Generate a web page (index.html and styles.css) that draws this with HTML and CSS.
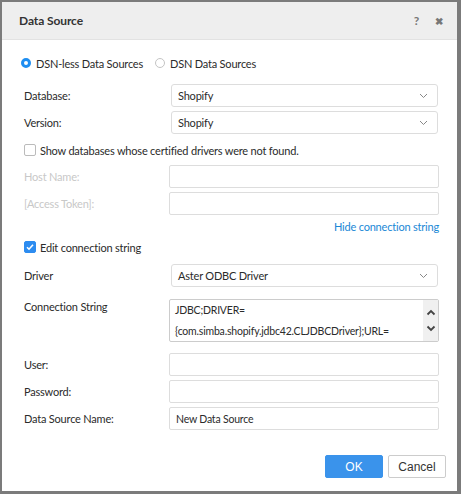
FILE: index.html
```html
<!DOCTYPE html>
<html>
<head>
<meta charset="utf-8">
<link rel="stylesheet" href="styles.css">
</head>
<body>
<div class="dialog">
  <div class="titlebar">
    <span class="title">Data Source</span>
    <span class="tools"><span class="help">?</span><span class="close">&#x2716;</span></span>
  </div>
  <div class="content">
    <div class="radios">
      <span class="radio checked"></span><span class="rlabel">DSN-less Data Sources</span>
      <span class="radio"></span><span class="rlabel">DSN Data Sources</span>
    </div>
    <div class="row r-db"><span class="label">Database:</span><div class="select">Shopify<svg class="chev" width="9" height="6" viewBox="0 0 9 6"><path d="M1 1l3.5 3.5L8 1" fill="none" stroke="#888" stroke-width="1"/></svg></div></div>
    <div class="row r-ver"><span class="label">Version:</span><div class="select">Shopify<svg class="chev" width="9" height="6" viewBox="0 0 9 6"><path d="M1 1l3.5 3.5L8 1" fill="none" stroke="#888" stroke-width="1"/></svg></div></div>
    <div class="check-row r-show"><span class="cbox"></span><span>Show databases whose certified drivers were not found.</span></div>
    <div class="row r-host"><span class="label disabled">Host Name:</span><div class="input"></div></div>
    <div class="row r-token"><span class="label disabled">[Access Token]:</span><div class="input"></div></div>
    <div class="link-row"><a class="link">Hide connection string</a></div>
    <div class="check-row r-edit"><span class="cbox on"><svg width="10" height="10" viewBox="0 0 10 10"><path d="M2 5.2l2 2 4-4.4" fill="none" stroke="#fff" stroke-width="1.6"/></svg></span><span>Edit connection string</span></div>
    <div class="row r-driver"><span class="label">Driver</span><div class="select">Aster ODBC Driver<svg class="chev" width="9" height="6" viewBox="0 0 9 6"><path d="M1 1l3.5 3.5L8 1" fill="none" stroke="#888" stroke-width="1"/></svg></div></div>
    <div class="row r-conn"><span class="label">Connection String</span>
      <div class="textarea">
        <div class="ta-text"><div>JDBC;DRIVER=</div><div>{com.simba.shopify.jdbc42.CLJDBCDriver};URL=</div></div>
        <div class="scroll">
          <svg width="10" height="7" viewBox="0 0 10 7"><path d="M1.5 5.5L5 2l3.5 3.5" fill="none" stroke="#444" stroke-width="1.8"/></svg>
          <svg width="10" height="7" viewBox="0 0 10 7"><path d="M1.5 1.5L5 5l3.5-3.5" fill="none" stroke="#444" stroke-width="1.8"/></svg>
        </div>
      </div>
    </div>
    <div class="row r-user"><span class="label">User:</span><div class="input"></div></div>
    <div class="row r-pass"><span class="label">Password:</span><div class="input"></div></div>
    <div class="row r-dsn"><span class="label">Data Source Name:</span><div class="input val">New Data Source</div></div>
    <div class="buttons"><button class="btn ok">OK</button><button class="btn cancel">Cancel</button></div>
  </div>
</div>
</body>
</html>
```
FILE: styles.css
```css
* { box-sizing: border-box; }
html, body { margin: 0; padding: 0; background: #fff; }
body { font-family: Lato, "Liberation Sans", sans-serif; font-size: 11px; letter-spacing: -0.2px; color: #2b2b2b; }
.dialog {
  width: 461px; height: 494px;
  border-style: solid; border-color: #7b7b7b;
  border-width: 2px 4px 3px 2px;
  display: flex; flex-direction: column;
}
.titlebar {
  height: 38px; background: #eeeeee; border-bottom: 1px solid #e2e2e2;
  display: flex; align-items: center; justify-content: space-between;
  padding: 0 14px 0 17px;
}
.title { font-weight: bold; font-size: 12px; letter-spacing: -0.1px; color: #333; }
.tools { display: flex; align-items: center; gap: 16px; color: #777; font-weight: bold; }
.help { font-size: 12px; }
.close { font-size: 10px; }
.content { padding: 0 18px 0 22px; }
.radios { display: flex; align-items: center; height: 18px; margin-top: 14px; }
.radio { width: 10px; height: 10px; border-radius: 50%; border: 1px solid #c4c4c4; margin: 0 5px 0 -3px; background: #fff; }
.radio.checked { border: 3px solid #1f8ef1; }
.rlabel { margin-right: 15px; }
.row { display: flex; align-items: center; }
.label { width: 147px; flex: none; }
.label.disabled { color: #c8c8c8; }
.select {
  width: 267px; height: 23px; border: 1px solid #ddd; border-radius: 3px;
  display: flex; align-items: center; justify-content: space-between; padding: 0 9px 0 6px;
}
.input { margin-left: -2px; width: 270px; height: 23px; border: 1px solid #ddd; border-radius: 2px; }
.input.val { font-size: 10.5px; display: flex; align-items: center; padding-left: 6px; }
.r-db { margin-top: 12px; }
.r-ver { margin-top: 4px; }
.check-row { display: flex; align-items: center; height: 16px; }
.cbox { width: 12px; height: 12px; border: 1px solid #bbb; border-radius: 2px; margin-right: 4px; display: flex; align-items: center; justify-content: center; }
.cbox.on { background: #2d8cf0; border-color: #2d8cf0; }
.r-show { margin-top: 8px; }
.r-host { margin-top: 7px; }
.r-token { margin-top: 4px; }
.link-row { display: flex; justify-content: flex-end; margin-top: 4px; height: 14px; align-items: center; }
.link { color: #1a88d6; }
.r-edit { margin-top: 6px; }
.r-driver { margin-top: 9px; }
.r-conn { margin-top: 12px; align-items: flex-start; }
.r-conn .label { padding-top: 1px; }
.textarea { margin-left: -2px; width: 270px; height: 43px; border: 1px solid #ccc; border-radius: 2px; display: flex; }
.ta-text { flex: 1; font-size: 10.5px; padding: 3px 0 0 5px; }
.ta-text div { height: 21px; line-height: 14px; }
.scroll { width: 15px; background: #f0f0f0; display: flex; flex-direction: column; justify-content: space-around; align-items: center; padding: 4px 0; }
.r-user { margin-top: 11px; }
.r-pass { margin-top: 4px; }
.r-dsn { margin-top: 4px; }
.buttons { display: flex; justify-content: flex-end; gap: 5px; margin-top: 25px; margin-right: -7px; }
.btn { height: 23px; width: 58px; font-family: "Liberation Sans", sans-serif; font-size: 12px; border-radius: 2px; }
.ok { background: #3a93eb; color: #fff; border: 1px solid #3a93eb; }
.cancel { background: #fff; color: #333; border: 1px solid #ccc; }
```
